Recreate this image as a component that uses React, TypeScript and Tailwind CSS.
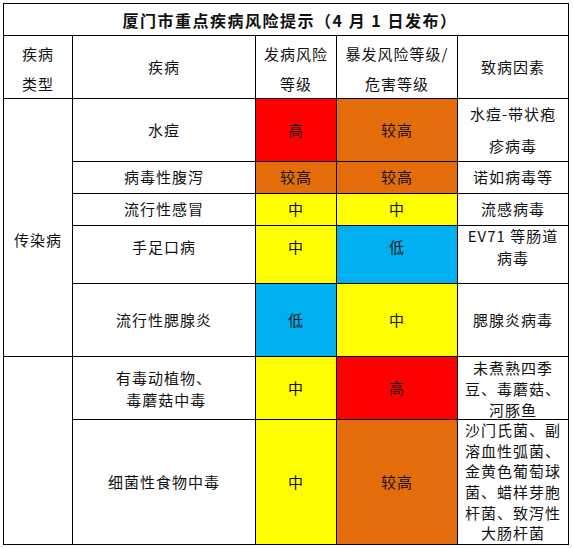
import React from 'react';

type Level = '高' | '较高' | '中' | '低';

const levelBg: Record<Level, string> = {
  高: 'bg-[#ff0000]',
  较高: 'bg-[#e46c0a]',
  中: 'bg-[#ffff00]',
  低: 'bg-[#00b0f0]',
};

const Cell: React.FC<{ className?: string; children?: React.ReactNode }> = ({ className = '', children }) => (
  <div className={`flex items-center justify-center text-center whitespace-nowrap ${className}`}>{children}</div>
);

const LevelCell: React.FC<{ level: Level; className?: string }> = ({ level, className = '' }) => (
  <Cell className={`${levelBg[level]} ${className}`}>{level}</Cell>
);

export default function App() {
  return (
    <div className="w-[573px] h-[548px] bg-white pt-[3px] pl-[3px]">
      <div
        className="grid w-[566px] gap-px bg-black p-px text-[15px] tracking-[1px] text-[#111] grid-cols-[68px_182px_80px_120px_110px] grid-rows-[31px_62px_62px_31px_31px_57px_72px_62px_124px]"
        style={{ fontFamily: '"Noto Sans CJK SC", "Noto Sans", sans-serif' }}
      >
        {/* 标题 */}
        <Cell className="col-span-5 bg-white font-bold text-[16px] tracking-[1.5px] pl-2">
          厦门市重点疾病风险提示（4&nbsp;月&nbsp;1&nbsp;日发布）
        </Cell>

        {/* 表头 */}
        <Cell className="bg-white leading-[30px] pt-[3px]">
          疾病
          <br />
          类型
        </Cell>
        <Cell className="bg-white">疾病</Cell>
        <Cell className="bg-white leading-[30px] pt-[3px]">
          发病风险
          <br />
          等级
        </Cell>
        <Cell className="bg-white leading-[30px] pt-[3px]">
          暴发风险等级/
          <br />
          危害等级
        </Cell>
        <Cell className="bg-white">致病因素</Cell>

        {/* 传染病 */}
        <Cell className="row-span-5 bg-white pt-[25px]">传染病</Cell>

        <Cell className="bg-white">水痘</Cell>
        <LevelCell level="高" />
        <LevelCell level="较高" />
        <Cell className="bg-white leading-[32px]">
          水痘-带状疱
          <br />
          疹病毒
        </Cell>

        <Cell className="bg-white">病毒性腹泻</Cell>
        <LevelCell level="较高" />
        <LevelCell level="较高" />
        <Cell className="bg-white">诺如病毒等</Cell>

        <Cell className="bg-white">流行性感冒</Cell>
        <LevelCell level="中" />
        <LevelCell level="中" />
        <Cell className="bg-white">流感病毒</Cell>

        <Cell className="bg-white pb-[15px]">手足口病</Cell>
        <LevelCell level="中" className="pb-[15px]" />
        <LevelCell level="低" className="pb-[15px]" />
        <Cell className="bg-white leading-[22px] pb-[15px]">
          EV71 等肠道
          <br />
          病毒
        </Cell>

        <Cell className="bg-white">流行性腮腺炎</Cell>
        <LevelCell level="低" />
        <LevelCell level="中" />
        <Cell className="bg-white">腮腺炎病毒</Cell>

        {/* 食物中毒 */}
        <Cell className="row-span-2 bg-white" />

        <Cell className="bg-white leading-[22px] pt-[2px]">
          有毒动植物、
          <br />
          &nbsp;毒蘑菇中毒
        </Cell>
        <LevelCell level="中" />
        <LevelCell level="高" />
        <Cell className="bg-white leading-[21px]">
          未煮熟四季
          <br />
          豆、毒蘑菇、
          <br />
          河豚鱼
        </Cell>

        <Cell className="bg-white">细菌性食物中毒</Cell>
        <LevelCell level="中" />
        <LevelCell level="较高" />
        <Cell className="bg-white leading-[20.6px]">
          沙门氏菌、副
          <br />
          溶血性弧菌、
          <br />
          金黄色葡萄球
          <br />
          菌、蜡样芽胞
          <br />
          杆菌、致泻性
          <br />
          大肠杆菌
        </Cell>
      </div>
    </div>
  );
}
